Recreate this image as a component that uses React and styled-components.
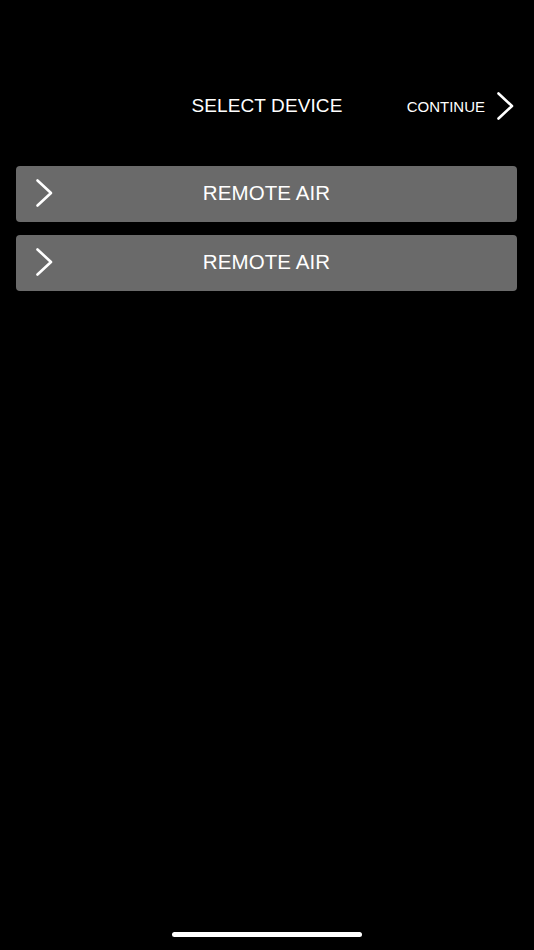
import React from "react";
import styled, { createGlobalStyle } from "styled-components";

const Global = createGlobalStyle`
  html, body { margin: 0; padding: 0; background: #000; }
  body { font-family: "Liberation Sans", Arial, Helvetica, sans-serif; color: #fff; }
`;

const Screen = styled.div`
  width: 534px;
  height: 950px;
  background: #000;
  display: flex;
  flex-direction: column;
  box-sizing: border-box;
  padding-top: 80px;
  padding-bottom: 13px;
`;

const Header = styled.div`
  height: 52px;
  display: grid;
  grid-template-columns: 1fr auto 1fr;
  align-items: center;
  padding-right: 19px;
  padding-left: 19px;
`;

const Title = styled.div`
  grid-column: 2;
  font-size: 19px;
  letter-spacing: 0.1px;
  color: #fff;
`;

const ContinueButton = styled.div`
  grid-column: 3;
  justify-self: end;
  display: flex;
  align-items: center;
  gap: 11px;
  font-size: 15px;
  color: #fff;
`;

const List = styled.div`
  margin: 34px 17px 0 16px;
  display: flex;
  flex-direction: column;
  gap: 13px;
`;

const Row = styled.div`
  height: 56px;
  border-radius: 4px;
  background: #6a6a6a;
  position: relative;
  display: flex;
  align-items: center;
  justify-content: center;
  box-sizing: border-box;
  padding-bottom: 2px;
`;

const RowChevron = styled.div`
  position: absolute;
  left: 19px;
  top: 12px;
  display: flex;
`;

const RowLabel = styled.div`
  font-size: 20.5px;
  color: #fff;
  letter-spacing: 0.1px;
`;

const HomeIndicator = styled.div`
  margin-top: auto;
  align-self: center;
  width: 190px;
  height: 5px;
  border-radius: 3px;
  background: #fff;
`;

const Chevron = () => (
  <svg width="19" height="30" viewBox="0 0 19 30">
    <polyline
      points="2.5,2.5 16,15 2.5,27.5"
      fill="none"
      stroke="#fff"
      strokeWidth="2.6"
      strokeLinecap="round"
      strokeLinejoin="round"
    />
  </svg>
);

export default function App() {
  const devices = ["REMOTE AIR", "REMOTE AIR"];
  return (
    <>
      <Global />
      <Screen>
        <Header>
          <Title>SELECT DEVICE</Title>
          <ContinueButton>
            CONTINUE
            <Chevron />
          </ContinueButton>
        </Header>
        <List>
          {devices.map((d, i) => (
            <Row key={i}>
              <RowChevron>
                <Chevron />
              </RowChevron>
              <RowLabel>{d}</RowLabel>
            </Row>
          ))}
        </List>
        <HomeIndicator />
      </Screen>
    </>
  );
}
